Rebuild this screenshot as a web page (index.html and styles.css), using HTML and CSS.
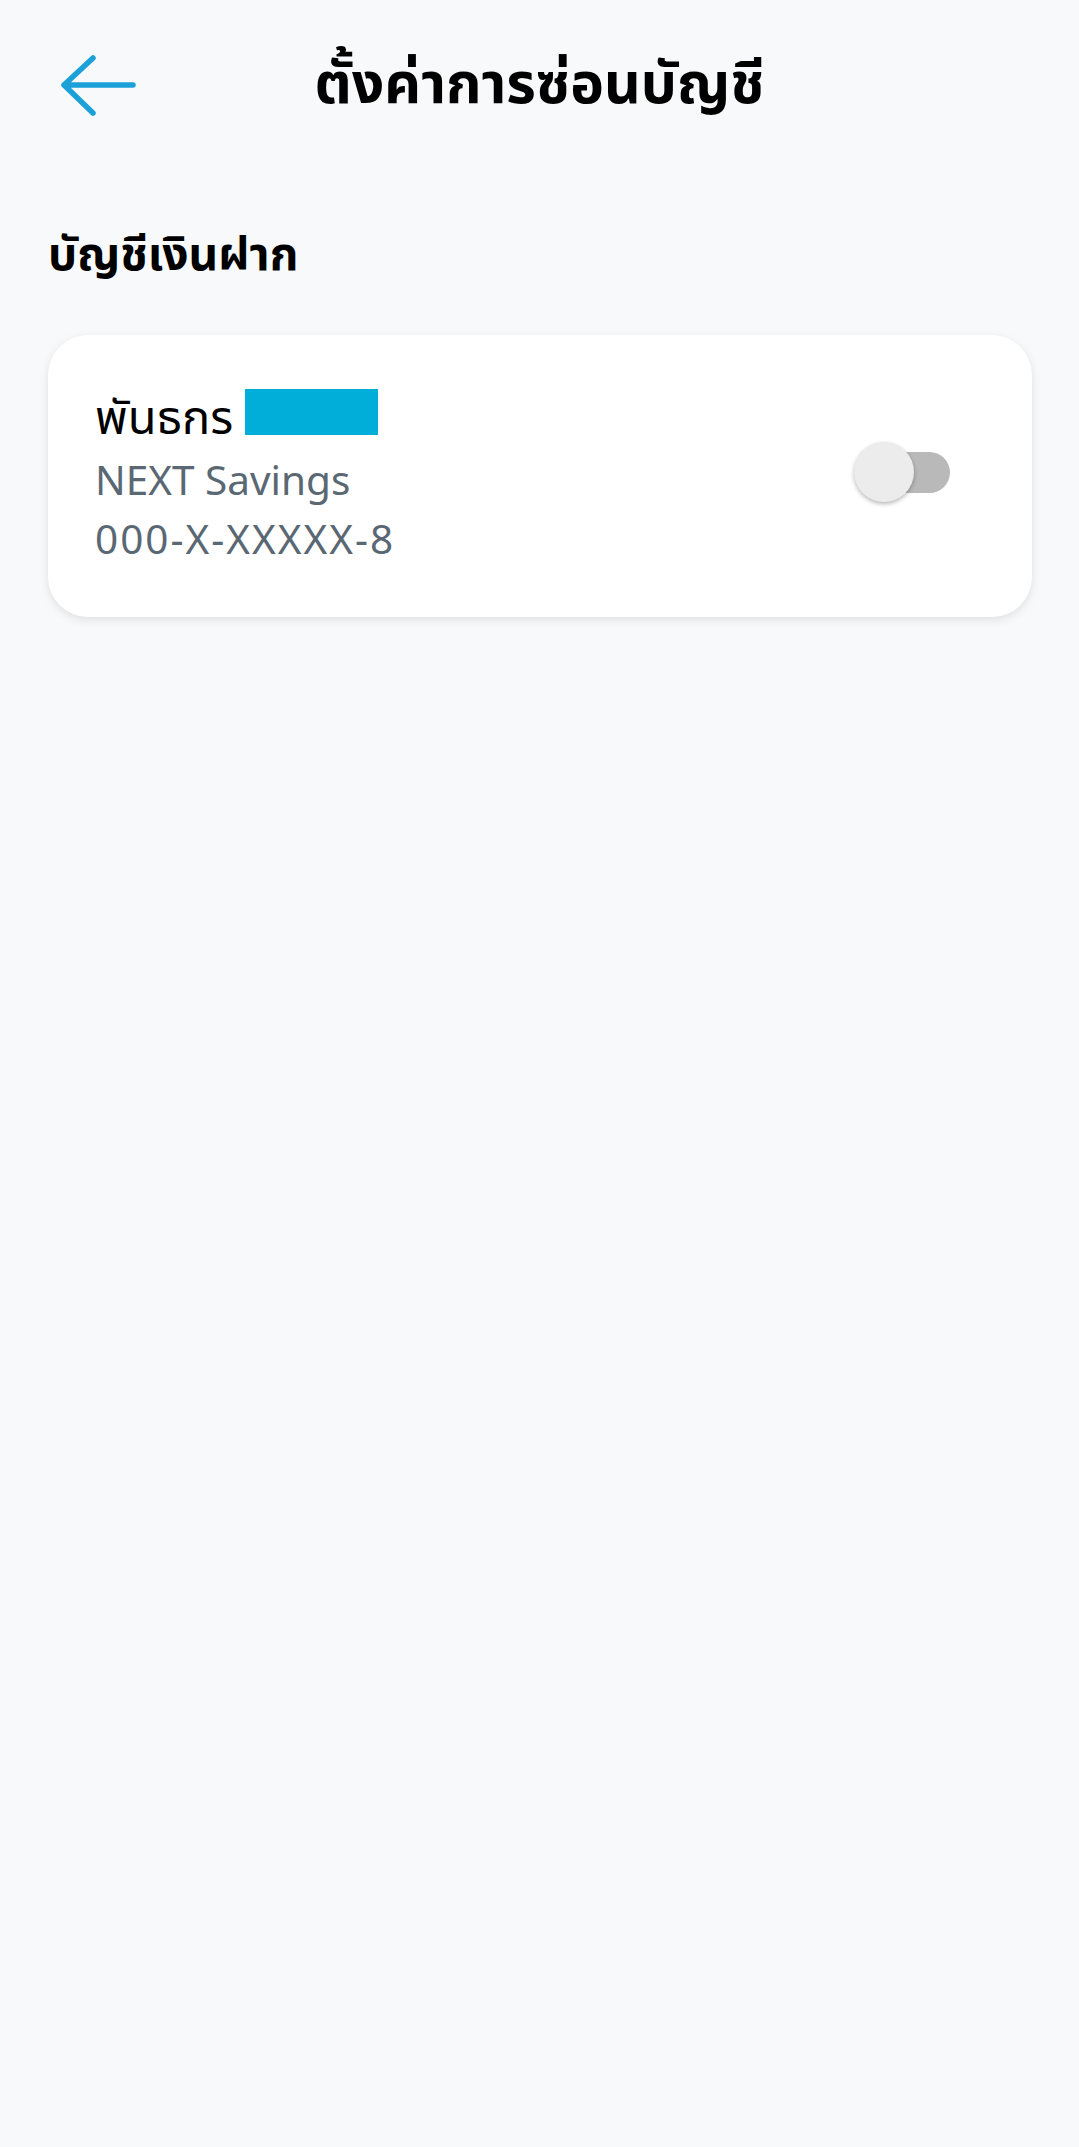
FILE: index.html
```html
<!DOCTYPE html>
<html lang="th">
<head>
<meta charset="utf-8">
<link rel="stylesheet" href="styles.css">
</head>
<body>
<div class="screen">
  <header class="topbar">
    <button class="back" aria-label="ย้อนกลับ">
      <svg width="80" height="66" viewBox="0 0 80 66"><path d="M35 5 L6 32 L35 60 M6 32 H75" fill="none" stroke="#1ba1d8" stroke-width="5.5" stroke-linecap="round" stroke-linejoin="round"/></svg>
    </button>
    <h1 class="title">ตั้งค่าการซ่อนบัญชี</h1>
    <span class="spacer"></span>
  </header>
  <h2 class="section">บัญชีเงินฝาก</h2>
  <div class="card">
    <div class="info">
      <div class="name">พันธกร <span class="mask"></span></div>
      <div class="sub first">NEXT Savings</div>
      <div class="sub num">000-X-XXXXX-8</div>
    </div>
    <div class="toggle"><span class="track"></span><span class="knob"></span></div>
  </div>
</div>
</body>
</html>
```

FILE: styles.css
```css
* { box-sizing: border-box; }
html, body { margin: 0; padding: 0; }
body {
  background: #f8f9fb;
  font-family: "Noto Sans", "Noto Sans Thai", sans-serif;
  color: #000;
}
.screen { width: 1079px; min-height: 2147px; }
.topbar {
  display: grid;
  grid-template-columns: 1fr auto 1fr;
  align-items: start;
  padding-top: 41px;
}
.back {
  justify-self: start;
  margin: 12px 0 0 58px;
  background: none;
  border: 0;
  padding: 0;
  line-height: 0;
  cursor: pointer;
}
.title {
  margin: 0;
  font-size: 57px;
  line-height: 80px;
  font-weight: 700;
  white-space: nowrap;
}
.section {
  margin: 101px 0 0 48px;
  font-size: 46px;
  line-height: 60px;
  font-weight: 700;
}
.card {
  margin: 53px 47px 0 48px;
  background: #fff;
  border-radius: 40px;
  height: 282px;
  box-shadow: 0 3px 10px rgba(0, 0, 0, 0.1);
  display: flex;
  align-items: center;
  justify-content: space-between;
  padding: 0 82px 0 47px;
}
.name {
  font-size: 47px;
  line-height: 64px;
  display: flex;
  align-items: center;
  gap: 12px;
}
.mask {
  display: inline-block;
  width: 133px;
  height: 46px;
  margin-bottom: 8px;
  background: #00afd9;
}
.sub {
  font-size: 40.5px;
  line-height: 61px;
  color: #5a6874;
}
.sub.first { margin-top: 1px; }
.sub.num { letter-spacing: 2px; margin-top: -2px; }
.toggle {
  position: relative;
  width: 96px;
  height: 60px;
  margin-bottom: 8px;
}
.track {
  position: absolute;
  left: 16px;
  right: 0;
  top: 10px;
  height: 41px;
  border-radius: 21px;
  background: #b9b9b9;
}
.knob {
  position: absolute;
  left: 0;
  top: 0;
  width: 60px;
  height: 60px;
  border-radius: 50%;
  background: #ececec;
  box-shadow: 0 2px 4px rgba(0, 0, 0, 0.28);
}
```
